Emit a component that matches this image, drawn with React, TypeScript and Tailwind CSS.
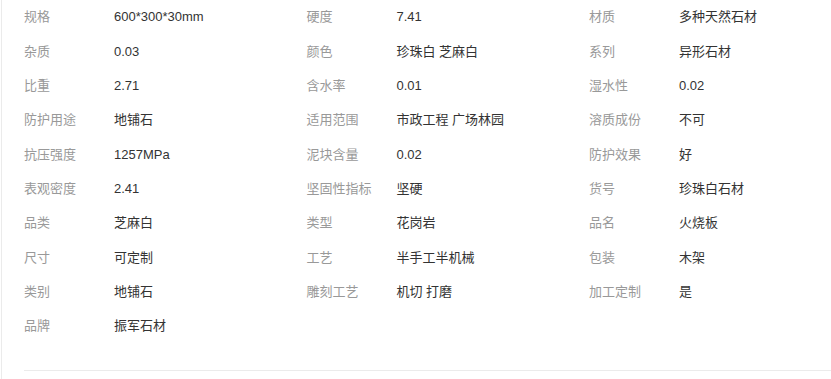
import React from "react";

const rows: [string, string][][] = [
  [["规格", "600*300*30mm"], ["硬度", "7.41"], ["材质", "多种天然石材"]],
  [["杂质", "0.03"], ["颜色", "珍珠白 芝麻白"], ["系列", "异形石材"]],
  [["比重", "2.71"], ["含水率", "0.01"], ["湿水性", "0.02"]],
  [["防护用途", "地铺石"], ["适用范围", "市政工程 广场林园"], ["溶质成份", "不可"]],
  [["抗压强度", "1257MPa"], ["泥块含量", "0.02"], ["防护效果", "好"]],
  [["表观密度", "2.41"], ["坚固性指标", "坚硬"], ["货号", "珍珠白石材"]],
  [["品类", "芝麻白"], ["类型", "花岗岩"], ["品名", "火烧板"]],
  [["尺寸", "可定制"], ["工艺", "半手工半机械"], ["包装", "木架"]],
  [["类别", "地铺石"], ["雕刻工艺", "机切 打磨"], ["加工定制", "是"]],
  [["品牌", "振军石材"]],
];

export default function App() {
  const items = rows.flat();
  return (
    <div
      className="w-[831px] h-[379px] overflow-hidden bg-white"
      style={{ fontFamily: '"Liberation Sans", "Noto Sans CJK SC", sans-serif' }}
    >
      <div className="ml-px h-full border-l border-[#ebebeb] pl-[22px] w-[900px]">
        <div className="grid grid-cols-[282.5px_282.5px_282.5px] text-[13px]">
          {items.map(([k, v], i) => (
            <div key={i} className="flex items-center h-[34.33px]">
              <span className="w-[90px] shrink-0 text-[#999999]">{k}</span>
              <span className="text-[#333333]">{v}</span>
            </div>
          ))}
        </div>
        <div className="mt-[26.5px] border-t border-[#ebebeb]" />
      </div>
    </div>
  );
}
